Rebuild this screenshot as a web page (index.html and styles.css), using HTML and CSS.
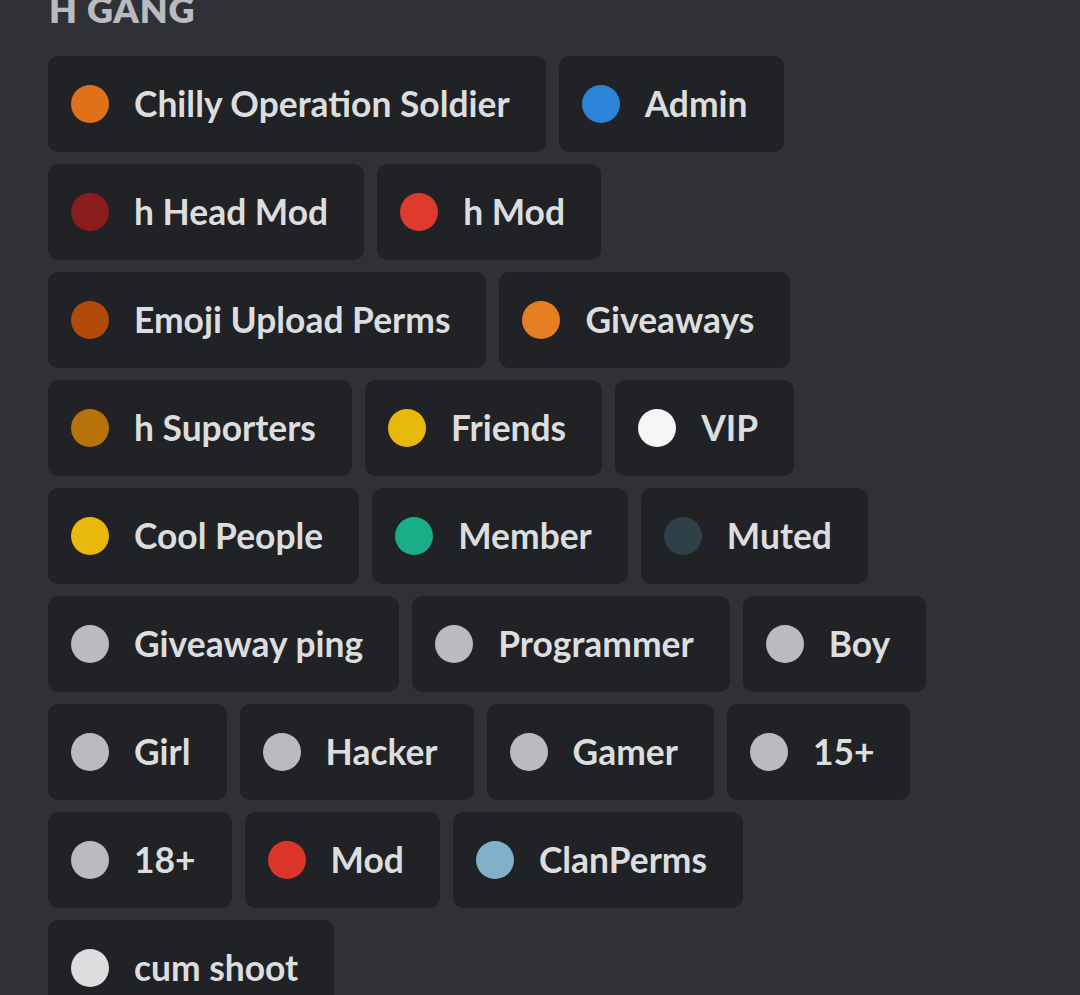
FILE: index.html
```html
<!DOCTYPE html>
<html>
<head>
<meta charset="utf-8">
<link rel="stylesheet" href="styles.css">
</head>
<body>
<div class="page">
  <h2 class="heading">H GANG</h2>
  <div class="roles">
    <div class="role"><span class="dot" style="background:#e0701a"></span><span class="name">Chilly Operation Soldier</span></div>
    <div class="role"><span class="dot" style="background:#2c83d8"></span><span class="name">Admin</span></div>
    <div class="role"><span class="dot" style="background:#8a1c1c"></span><span class="name">h Head Mod</span></div>
    <div class="role"><span class="dot" style="background:#e03a2e"></span><span class="name">h Mod</span></div>
    <div class="role"><span class="dot" style="background:#b24a0c"></span><span class="name">Emoji Upload Perms</span></div>
    <div class="role"><span class="dot" style="background:#e67e22"></span><span class="name">Giveaways</span></div>
    <div class="role"><span class="dot" style="background:#b8720a"></span><span class="name">h Suporters</span></div>
    <div class="role"><span class="dot" style="background:#e8b80a"></span><span class="name">Friends</span></div>
    <div class="role"><span class="dot" style="background:#f6f6f6"></span><span class="name">VIP</span></div>
    <div class="role"><span class="dot" style="background:#e8b80a"></span><span class="name">Cool People</span></div>
    <div class="role"><span class="dot" style="background:#1aae88"></span><span class="name">Member</span></div>
    <div class="role"><span class="dot" style="background:#2e4149"></span><span class="name">Muted</span></div>
    <div class="role"><span class="dot" style="background:#b9bbbe"></span><span class="name">Giveaway ping</span></div>
    <div class="role"><span class="dot" style="background:#b9bbbe"></span><span class="name">Programmer</span></div>
    <div class="role"><span class="dot" style="background:#b9bbbe"></span><span class="name">Boy</span></div>
    <div class="role"><span class="dot" style="background:#b9bbbe"></span><span class="name">Girl</span></div>
    <div class="role"><span class="dot" style="background:#b9bbbe"></span><span class="name">Hacker</span></div>
    <div class="role"><span class="dot" style="background:#b9bbbe"></span><span class="name">Gamer</span></div>
    <div class="role"><span class="dot" style="background:#b9bbbe"></span><span class="name">15+</span></div>
    <div class="role"><span class="dot" style="background:#b9bbbe"></span><span class="name">18+</span></div>
    <div class="role"><span class="dot" style="background:#db3429"></span><span class="name">Mod</span></div>
    <div class="role"><span class="dot" style="background:#7fb2c8"></span><span class="name">ClanPerms</span></div>
    <div class="role"><span class="dot" style="background:#dcddde"></span><span class="name">cum shoot</span></div>
  </div>
</div>
</body>
</html>
```

FILE: styles.css
```css
html, body {
  margin: 0;
  padding: 0;
  background: #2f3136;
  height: 100%;
  overflow: hidden;
}
.page {
  padding: 0 0 0 48px;
  font-family: Lato, "Open Sans", sans-serif;
}
.heading {
  margin: -12px 0 0 1px;
  font-size: 36px;
  font-weight: 800;
  color: #b9bbbe;
  line-height: 42px;
  letter-spacing: 0.8px;
}
.roles {
  display: flex;
  flex-wrap: wrap;
  gap: 12px 13px;
  margin-top: 26px;
  max-width: 930px;
}
.role {
  display: flex;
  align-items: center;
  height: 96px;
  box-sizing: border-box;
  padding: 0 36px 2px 23px;
  background: #202225;
  border-radius: 10px;
}
.dot {
  width: 38px;
  height: 38px;
  border-radius: 50%;
  flex: none;
  margin-right: 25px;
  margin-top: 2px;
}
.name {
  font-size: 35.4px;
  font-weight: 700;
  color: #dcddde;
  white-space: nowrap;
}
```
